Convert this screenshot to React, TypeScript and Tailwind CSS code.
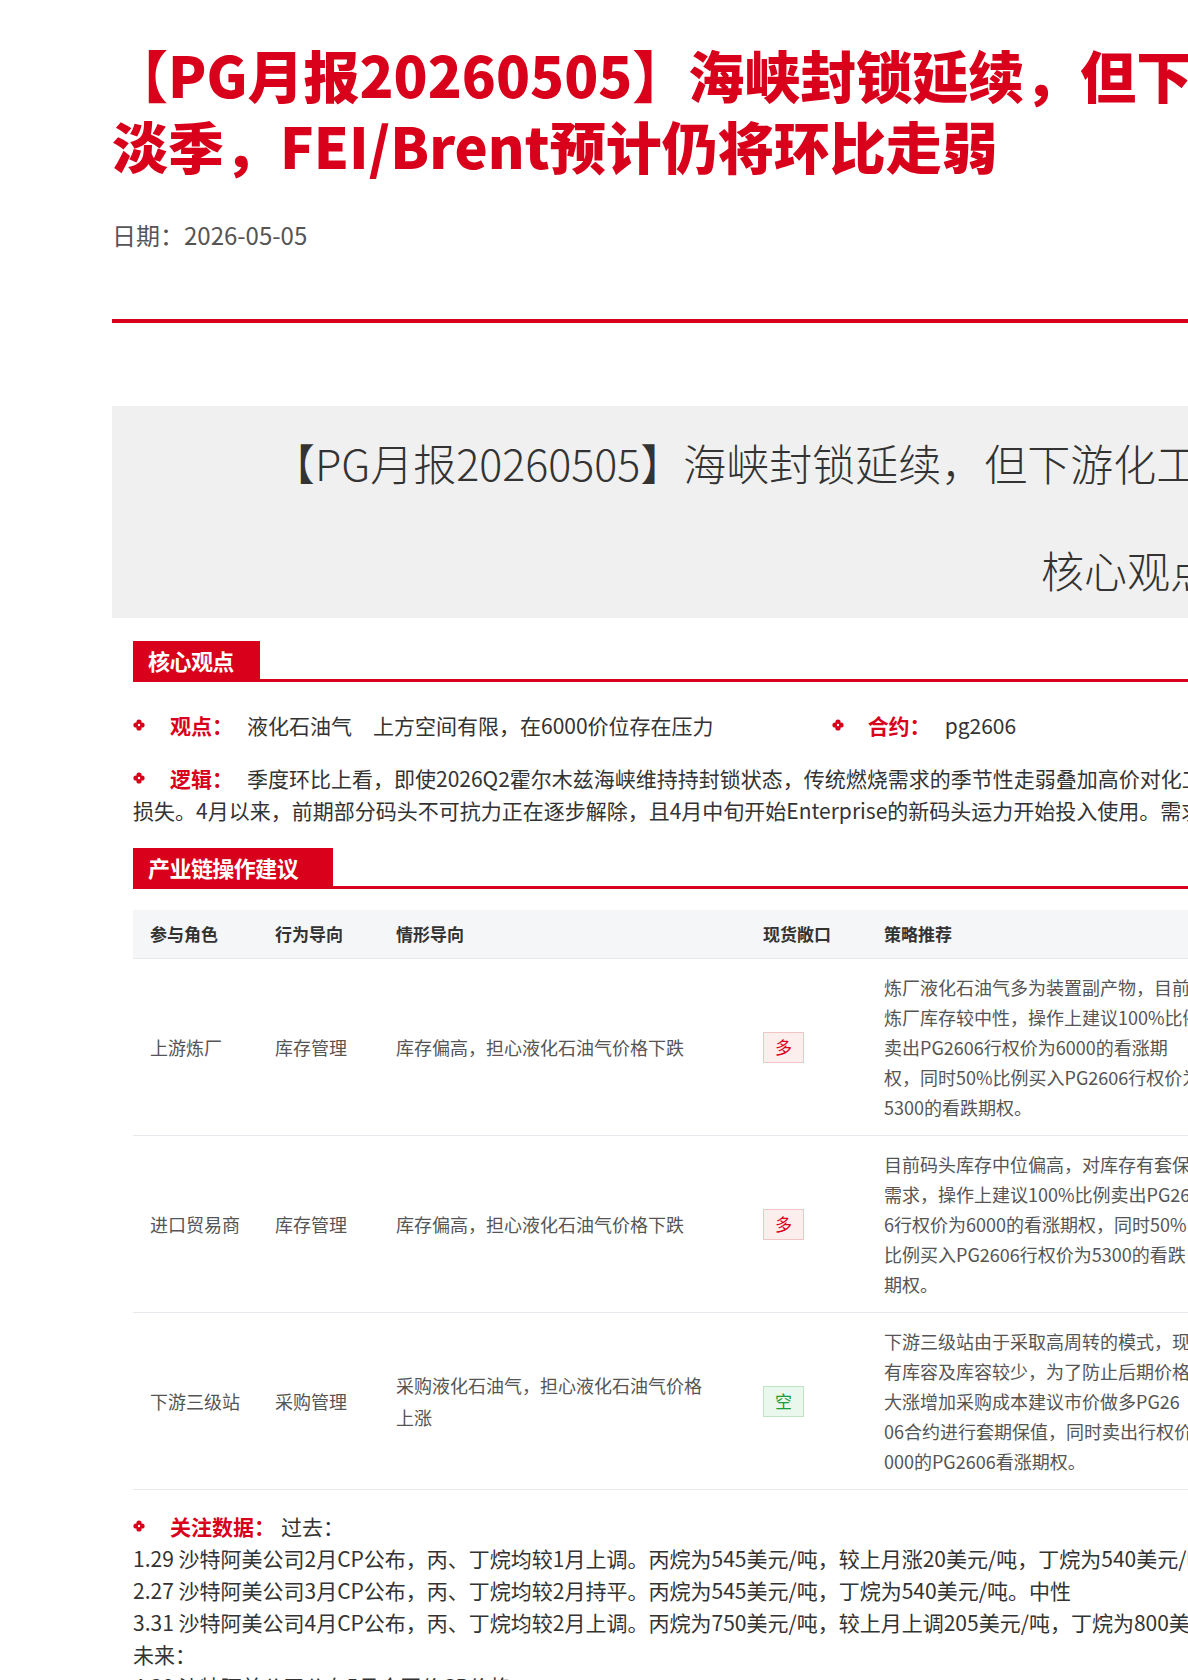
import React from "react";

const F = { fontFamily: '"Noto Sans CJK SC", "Noto Sans", sans-serif' };

function Dot() {
  return (
    <svg width="12" height="12" viewBox="0 0 12 12" className="shrink-0">
      <circle cx="6" cy="3" r="2.6" fill="#d9001b" />
      <circle cx="6" cy="9" r="2.6" fill="#d9001b" />
      <circle cx="3" cy="6" r="2.6" fill="#d9001b" />
      <circle cx="9" cy="6" r="2.6" fill="#d9001b" />
      <circle cx="6" cy="6" r="1.2" fill="#fff" />
    </svg>
  );
}

function Tab({ t, w }: { t: string; w: string }) {
  return (
    <div className="flex items-end border-b-[3px] border-[#d9001b]">
      <div className={`${w} h-[38px] bg-[#d9001b] text-white font-bold text-[22px] flex items-center pl-[15px] tracking-tight`}>{t}</div>
    </div>
  );
}

const rows = [
  {
    a: "上游炼厂", b: "库存管理", c: ["库存偏高，担心液化石油气价格下跌"], d: "多",
    e: ["炼厂液化石油气多为装置副产物，目前", "炼厂库存较中性，操作上建议100%比例", "卖出PG2606行权价为6000的看涨期", "权，同时50%比例买入PG2606行权价为", "5300的看跌期权。"],
  },
  {
    a: "进口贸易商", b: "库存管理", c: ["库存偏高，担心液化石油气价格下跌"], d: "多",
    e: ["目前码头库存中位偏高，对库存有套保", "需求，操作上建议100%比例卖出PG260", "6行权价为6000的看涨期权，同时50%", "比例买入PG2606行权价为5300的看跌", "期权。"],
  },
  {
    a: "下游三级站", b: "采购管理", c: ["采购液化石油气，担心液化石油气价格", "上涨"], d: "空",
    e: ["下游三级站由于采取高周转的模式，现", "有库容及库容较少，为了防止后期价格", "大涨增加采购成本建议市价做多PG26", "06合约进行套期保值，同时卖出行权价为6", "000的PG2606看涨期权。"],
  },
];

export default function App() {
  return (
    <div style={F} className="w-[1188px] h-[1680px] overflow-hidden bg-white">
      <div className="ml-[112px] w-[1500px]">
        <h1 className="pt-[38px] text-[#d9001b] font-black text-[56px] leading-[71px] whitespace-nowrap">
          <div>【PG月报20260505】海峡封锁延续，但下游化工需求进入</div>
          <div>淡季，FEI/Brent预计仍将环比走弱</div>
        </h1>
        <div className="mt-[40px] text-[24px] text-[#555] leading-[30px]">日期：2026-05-05</div>
        <div className="mt-[69px] h-[4px] bg-[#d9001b]" />
        <div className="mt-[83px] h-[212px] bg-[#f0f0f0] text-[#333] text-[43px] font-light whitespace-nowrap">
          <div className="pl-[160px] pt-[28px] leading-[57px]">【PG月报20260505】海峡封锁延续，但下游化工需求进入淡季</div>
          <div className="pl-[929px] mt-[50px] leading-[57px]">核心观点</div>
        </div>

        <div className="pl-[21px] mt-[23px] w-[1400px]">
          <Tab t="核心观点" w="w-[127px]" />
          <div className="mt-[27px] flex items-center text-[21px] leading-[32px] text-[#333] whitespace-nowrap">
            <Dot />
            <span className="ml-[25px] text-[#d9001b] font-bold">观点：</span>
            <span className="ml-[14px]">液化石油气　上方空间有限，在6000价位存在压力</span>
            <span className="ml-[118px] flex items-center"><Dot /><span className="ml-[24px] text-[#d9001b] font-bold">合约：</span><span className="ml-[14px]">pg2606</span></span>
          </div>
          <div className="mt-[21px] text-[21px] leading-[32px] text-[#333] whitespace-nowrap">
            <div className="flex items-center">
              <Dot />
              <span className="ml-[25px] text-[#d9001b] font-bold">逻辑：</span>
              <span className="ml-[14px]">季度环比上看，即使2026Q2霍尔木兹海峡维持持封锁状态，传统燃烧需求的季节性走弱叠加高价对化工需求的抑制，需求端的</span>
            </div>
            <div>损失。4月以来，前期部分码头不可抗力正在逐步解除，且4月中旬开始Enterprise的新码头运力开始投入使用。需求</div>
          </div>
          <div className="mt-[22px]"><Tab t="产业链操作建议" w="w-[200px]" /></div>

          <div className="mt-[21px] text-[18px] text-[#555]">
            <div className="flex h-[49px] items-center bg-[#f5f6f8] border-b border-[#e6e9ee] font-bold text-[#333] text-[17px]">
              <div className="w-[125px] pl-[17px]">参与角色</div>
              <div className="w-[121px] pl-[17px]">行为导向</div>
              <div className="w-[367px] pl-[17px]">情形导向</div>
              <div className="w-[121px] pl-[17px]">现货敞口</div>
              <div className="pl-[17px]">策略推荐</div>
            </div>
            {rows.map((r, i) => (
              <div key={i} className="flex h-[177px] items-center border-b border-[#e6e9ee]">
                <div className="w-[125px] pl-[17px]">{r.a}</div>
                <div className="w-[121px] pl-[17px]">{r.b}</div>
                <div className="w-[367px] pl-[17px] leading-[32px]">{r.c.map((l) => <div key={l}>{l}</div>)}</div>
                <div className="w-[121px] pl-[17px]">
                  <span className={`inline-flex w-[41px] h-[31px] items-center justify-center border text-[17px] ${r.d === "多" ? "bg-[#fdeeee] border-[#f4c4c4] text-[#d9001b]" : "bg-[#eaf7ec] border-[#bfe3c5] text-[#1a9c3a]"}`}>{r.d}</span>
                </div>
                <div className="pl-[17px] text-[18px] leading-[30px] whitespace-nowrap">{r.e.map((l) => <div key={l}>{l}</div>)}</div>
              </div>
            ))}
          </div>

          <div className="mt-[20px] text-[21px] leading-[32px] text-[#333] whitespace-nowrap">
            <div className="flex items-center">
              <Dot />
              <span className="ml-[25px] text-[#d9001b] font-bold">关注数据：</span>
              <span className="ml-[6px]">过去：</span>
            </div>
            <div>1.29 沙特阿美公司2月CP公布，丙、丁烷均较1月上调。丙烷为545美元/吨，较上月涨20美元/吨，丁烷为540美元/吨，较上月涨20美元/吨。</div>
            <div>2.27 沙特阿美公司3月CP公布，丙、丁烷均较2月持平。丙烷为545美元/吨，丁烷为540美元/吨。中性</div>
            <div>3.31 沙特阿美公司4月CP公布，丙、丁烷均较2月上调。丙烷为750美元/吨，较上月上调205美元/吨，丁烷为800美元/吨。</div>
            <div>未来：</div>
            <div>4.30 沙特阿美公司公布5月合同价CP价格</div>
          </div>
        </div>
      </div>
    </div>
  );
}
